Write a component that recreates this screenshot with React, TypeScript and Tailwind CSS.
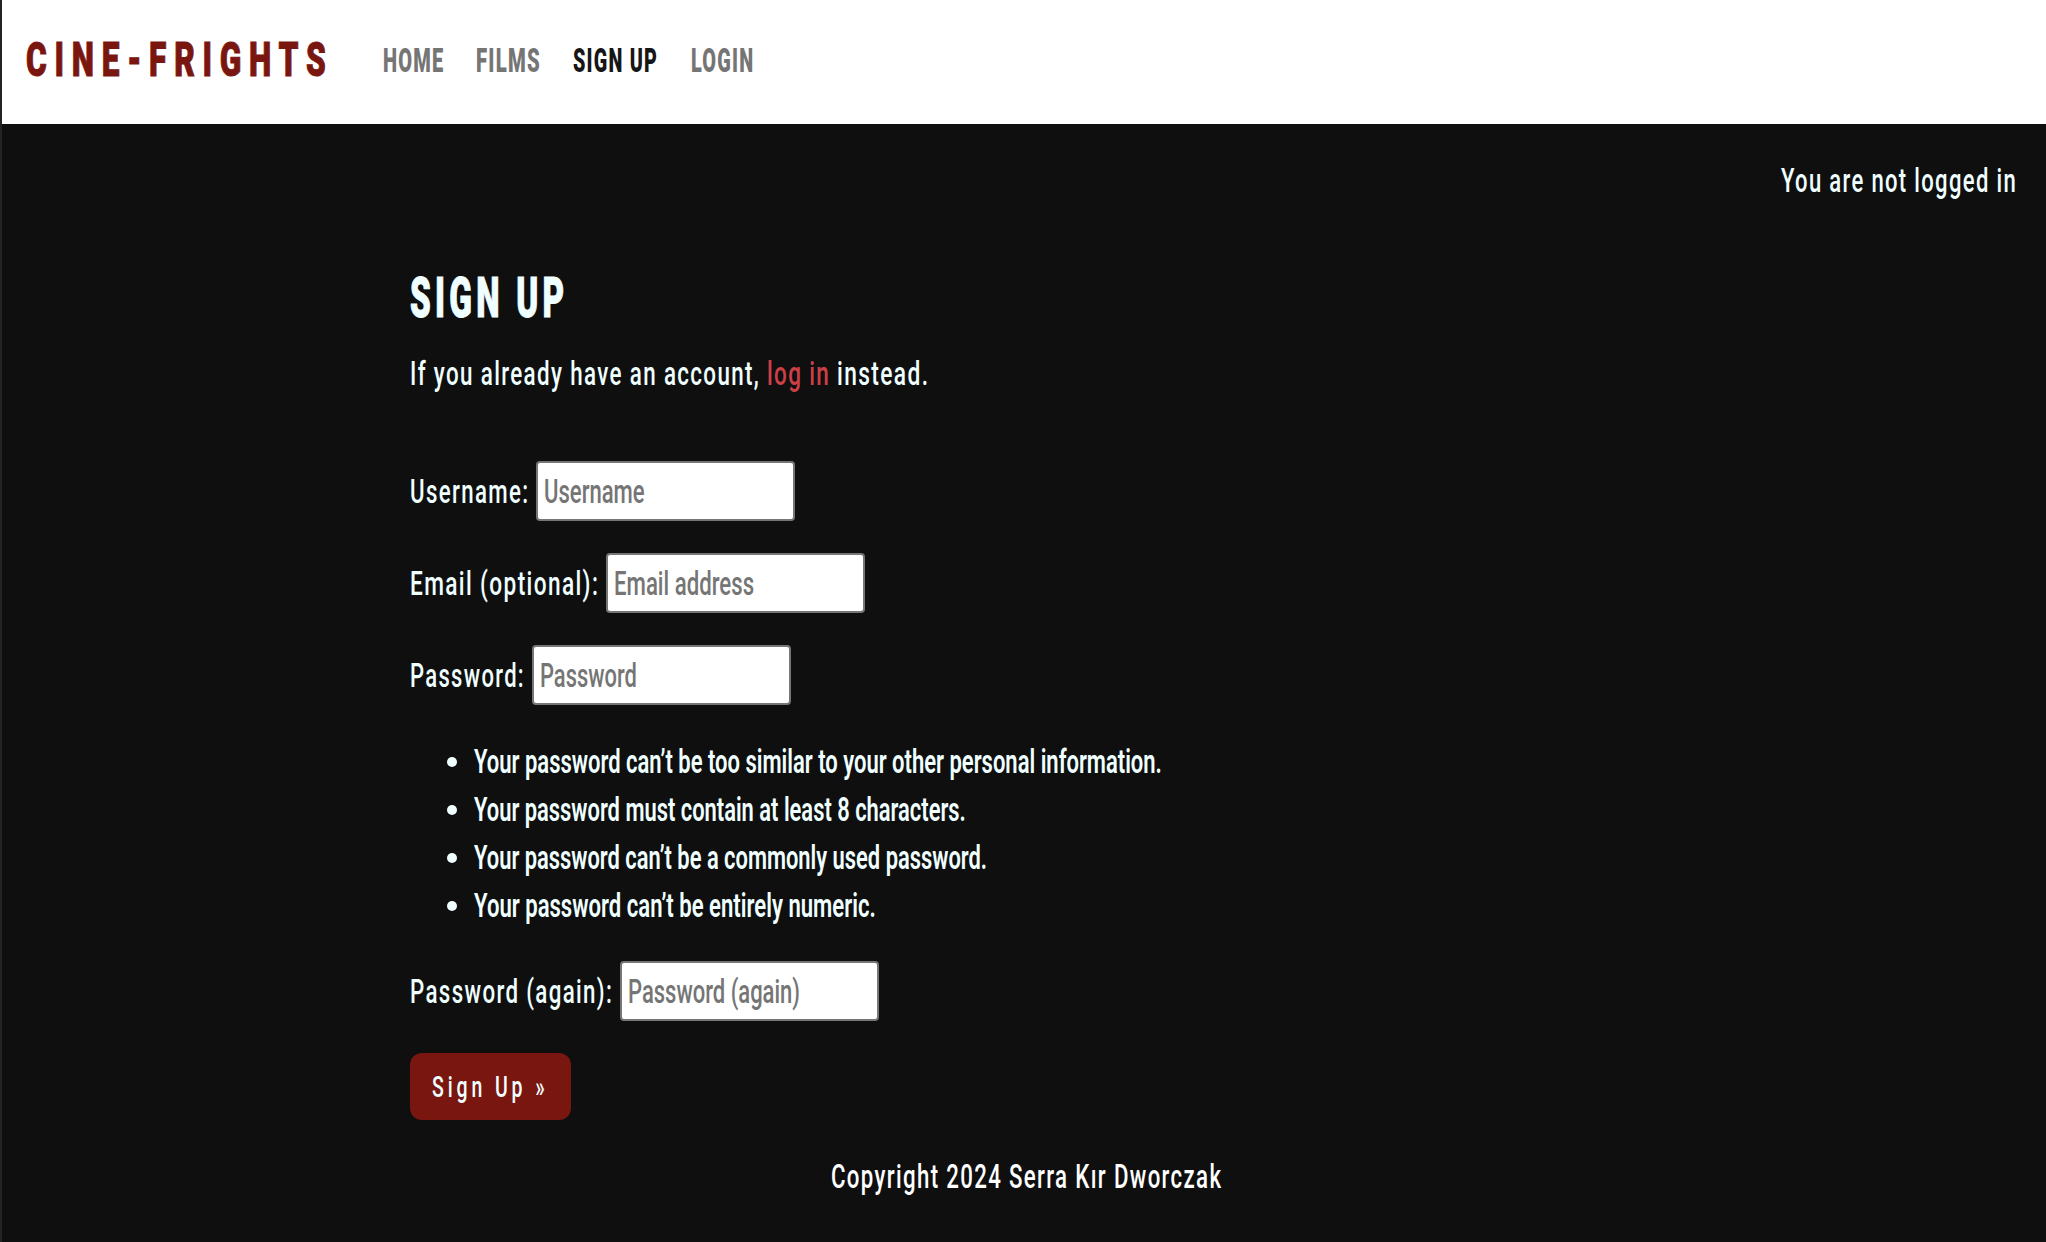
import { useLayoutEffect, useRef, useState } from "react";

type FitProps = { text: string; w: number; className?: string };

/** Condensed text: a line squeezed horizontally to occupy exactly `w` pixels. */
function Fit({ text, w, className = "" }: FitProps) {
  const ref = useRef<HTMLSpanElement>(null);
  const [scale, setScale] = useState(1);
  useLayoutEffect(() => {
    const el = ref.current;
    if (!el) return;
    const spacing = parseFloat(getComputedStyle(el).letterSpacing) || 0;
    setScale(w / (el.offsetWidth - spacing));
  }, [text, w]);
  return (
    <span className={`inline-block shrink-0 whitespace-nowrap ${className}`} style={{ width: w }}>
      <span
        ref={ref}
        className="inline-block origin-left"
        style={{ transform: `translateY(1px) scaleX(${scale})` }}
      >
        {text}
      </span>
    </span>
  );
}

type FieldProps = {
  label: string;
  labelW: number;
  hint: string;
  hintW: number;
  type?: string;
  className?: string;
};

function Field({ label, labelW, hint, hintW, type = "text", className = "" }: FieldProps) {
  return (
    <label className={`flex h-[60px] items-center gap-[8px] ${className}`}>
      <Fit text={label} w={labelW} className="tracking-[2px]" />
      <span className="relative flex h-[60px] w-[259px] items-center rounded-[4px] border-2 border-[#767676] bg-white pl-[6px] text-[#757575]">
        <Fit text={hint} w={hintW} />
        <input type={type} aria-label={label} className="absolute inset-0 bg-transparent outline-none" />
      </span>
    </label>
  );
}

const rules = [
  { text: "Your password can’t be too similar to your other personal information.", w: 688 },
  { text: "Your password must contain at least 8 characters.", w: 492 },
  { text: "Your password can’t be a commonly used password.", w: 513 },
  { text: "Your password can’t be entirely numeric.", w: 402 },
];

export default function App() {
  return (
    <div className="h-[1242px] w-full overflow-hidden border-l-2 border-[#242424] bg-[#0f0f0f] font-['Roboto',sans-serif] text-[33px] leading-[48px] font-medium text-[#f0ffff]">
      <nav className="flex h-[124px] items-center bg-white pb-1 pl-[24px] font-black text-[#757575]">
        <Fit
          text="CINE-FRIGHTS"
          w={300}
          className="-mt-[2px] text-[49px] tracking-[12px] text-[#7a1610] [-webkit-text-stroke:1px_#7a1610]"
        />
        <Fit text="HOME" w={60} className="ml-[57px] tracking-[2px]" />
        <Fit text="FILMS" w={64} className="ml-[33px] tracking-[2px]" />
        <Fit text="SIGN UP" w={84} className="ml-[33px] tracking-[2px] text-[#161616]" />
        <Fit text="LOGIN" w={62} className="ml-[34px] tracking-[2px]" />
      </nav>

      <div className="mt-[32px] flex justify-end pr-[30px]">
        <Fit text="You are not logged in" w={235} className="tracking-[2px]" />
      </div>

      <main className="ml-[408px]">
        <h1 className="mt-[57px] h-[72px] text-[55px] leading-[72px] font-black">
          <Fit text="SIGN UP" w={154} className="tracking-[7px] [-webkit-text-stroke:1px_#f0ffff]" />
        </h1>
        <p className="mt-[16px] flex">
          <Fit text="If you already have an account," w={349} className="tracking-[2px]" />
          <Fit text="log in" w={62} className="ml-[8px] tracking-[2px] text-[#cd3f47]" />
          <Fit text="instead." w={91} className="ml-[8px] tracking-[2px]" />
        </p>

        <form className="-ml-px mt-[64px]" onSubmit={(e) => e.preventDefault()}>
          <div className="pl-px">
            <Field label="Username:" labelW={118} hint="Username" hintW={101} />
            <Field label="Email (optional):" labelW={188} hint="Email address" hintW={140} className="mt-8" />
            <Field label="Password:" labelW={114} hint="Password" hintW={97} type="password" className="mt-8" />
          </div>
          <ul className="mt-[33px]">
            {rules.map((r) => (
              <li key={r.text} className="flex h-12 items-center pl-[38px] font-semibold">
                <span className="mr-[17px] size-[10px] rounded-full bg-[#f0ffff]" />
                <Fit text={r.text} w={r.w} className="-mt-[3px]" />
              </li>
            ))}
          </ul>
          <div className="pl-px">
            <Field
              label="Password (again):"
              labelW={202}
              hint="Password (again)"
              hintW={172}
              type="password"
              className="mt-[31px]"
            />
          </div>
          <button className="mt-8 ml-px flex h-[67px] w-[161px] items-center rounded-[12px] bg-[#7a1610] pl-[22px] text-[30px]">
            <Fit text="Sign Up »" w={113} className="-mt-px tracking-[6px]" />
          </button>
        </form>
      </main>

      <footer className="mt-[32px] flex justify-center pl-[3px] text-white">
        <Fit text="Copyright 2024 Serra Kır Dworczak" w={390} className="tracking-[2px]" />
      </footer>
    </div>
  );
}
